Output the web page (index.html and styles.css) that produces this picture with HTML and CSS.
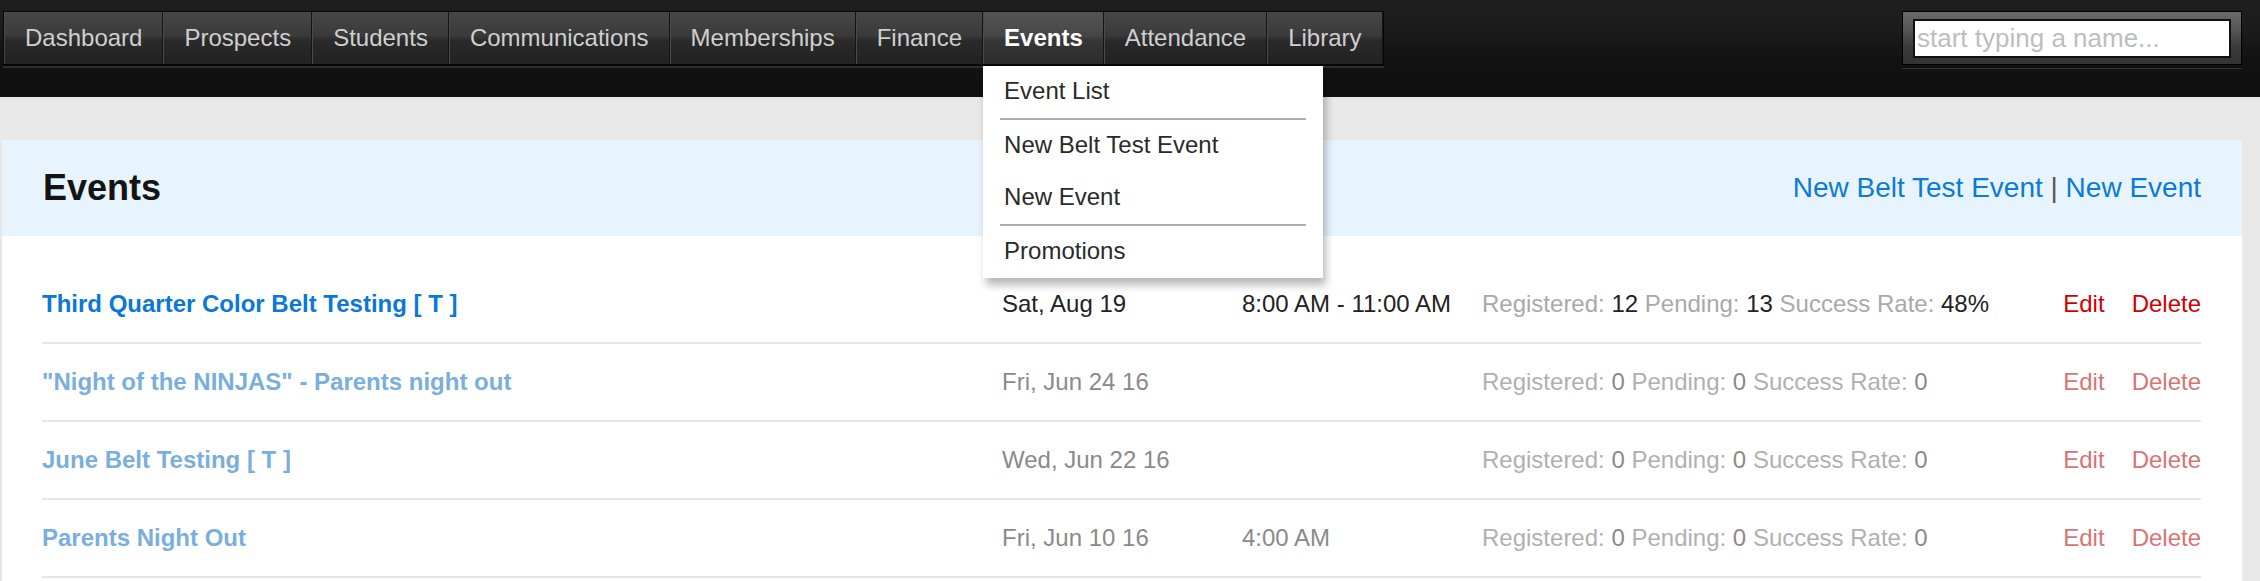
FILE: index.html
```html
<!DOCTYPE html>
<html>
<head>
<meta charset="utf-8">
<title>Events</title>
<link rel="stylesheet" href="styles.css">
</head>
<body>
<header class="topbar">
  <nav class="mainnav">
    <a class="nav-item" href="#">Dashboard</a>
    <a class="nav-item" href="#">Prospects</a>
    <a class="nav-item" href="#">Students</a>
    <a class="nav-item" href="#">Communications</a>
    <a class="nav-item" href="#">Memberships</a>
    <a class="nav-item" href="#">Finance</a>
    <div class="nav-drop">
      <a class="nav-item active" href="#">Events</a>
      <ul class="dropdown">
        <li><a href="#">Event List</a></li>
        <li class="sep"></li>
        <li><a href="#">New Belt Test Event</a></li>
        <li><a href="#">New Event</a></li>
        <li class="sep"></li>
        <li><a href="#">Promotions</a></li>
      </ul>
    </div>
    <a class="nav-item" href="#">Attendance</a>
    <a class="nav-item" href="#">Library</a>
  </nav>
  <div class="searchbox">
    <input class="search-input" type="text" placeholder="start typing a name...">
  </div>
</header>

<main class="panel">
  <div class="panel-head">
    <h1 class="panel-title">Events</h1>
    <div class="head-links">
      <a href="#">New Belt Test Event</a>
      <span class="pipe">|</span>
      <a href="#">New Event</a>
    </div>
  </div>
  <div class="event-list">
    <div class="event-row upcoming">
      <a class="ev-name" href="#">Third Quarter Color Belt Testing [ T ]</a>
      <span class="ev-date">Sat, Aug 19</span>
      <span class="ev-time">8:00 AM - 11:00 AM</span>
      <span class="ev-stats"><span class="lbl">Registered:</span> <span class="val">12</span> <span class="lbl">Pending:</span> <span class="val">13</span> <span class="lbl">Success Rate:</span> <span class="val">48%</span></span>
      <span class="ev-actions"><a href="#">Edit</a><a href="#">Delete</a></span>
    </div>
    <div class="event-row past">
      <a class="ev-name" href="#">"Night of the NINJAS" - Parents night out</a>
      <span class="ev-date">Fri, Jun 24 16</span>
      <span class="ev-time"></span>
      <span class="ev-stats"><span class="lbl">Registered:</span> <span class="val">0</span> <span class="lbl">Pending:</span> <span class="val">0</span> <span class="lbl">Success Rate:</span> <span class="val">0</span></span>
      <span class="ev-actions"><a href="#">Edit</a><a href="#">Delete</a></span>
    </div>
    <div class="event-row past">
      <a class="ev-name" href="#">June Belt Testing [ T ]</a>
      <span class="ev-date">Wed, Jun 22 16</span>
      <span class="ev-time"></span>
      <span class="ev-stats"><span class="lbl">Registered:</span> <span class="val">0</span> <span class="lbl">Pending:</span> <span class="val">0</span> <span class="lbl">Success Rate:</span> <span class="val">0</span></span>
      <span class="ev-actions"><a href="#">Edit</a><a href="#">Delete</a></span>
    </div>
    <div class="event-row past">
      <a class="ev-name" href="#">Parents Night Out</a>
      <span class="ev-date">Fri, Jun 10 16</span>
      <span class="ev-time">4:00 AM</span>
      <span class="ev-stats"><span class="lbl">Registered:</span> <span class="val">0</span> <span class="lbl">Pending:</span> <span class="val">0</span> <span class="lbl">Success Rate:</span> <span class="val">0</span></span>
      <span class="ev-actions"><a href="#">Edit</a><a href="#">Delete</a></span>
    </div>
  </div>
</main>
</body>
</html>
```

FILE: styles.css
```css
html, body {
  margin: 0;
  padding: 0;
}
body {
  background: #e8e8e8;
  font-family: "Liberation Sans", Arial, sans-serif;
  font-size: 24px;
  line-height: 36px;
  color: #222;
  overflow: hidden;
}
a {
  text-decoration: none;
}

/* ---------- top bar ---------- */
.topbar {
  height: 97px;
  box-sizing: border-box;
  padding: 11px 18px 0 3px;
  display: flex;
  justify-content: space-between;
  align-items: flex-start;
  background: linear-gradient(#1f1f1f 0, #1b1b1b 30px, #121212 60px, #111 97px);
}
.mainnav {
  display: flex;
  border: 1px solid #080808;
  border-bottom-width: 2px;
  box-shadow: 0 2px 0 #2e2e2e;
  background: #222;
}
.nav-item {
  display: block;
  height: 52px;
  line-height: 52px;
  padding: 0 20px;
  color: #cfcfcf;
  background: linear-gradient(#474747 0, #3a3a3a 45%, #2a2a2a 55%, #222 100%);
  border-left: 1px solid #4a4a4a;
  border-right: 1px solid #141414;
}
.nav-item.active {
  color: #fff;
  font-weight: bold;
  background: linear-gradient(#555 0, #464646 45%, #363636 55%, #2c2c2c 100%);
}
.nav-drop {
  position: relative;
}
.dropdown {
  position: absolute;
  left: 0;
  top: 54px;
  width: 340px;
  margin: 0;
  padding: 0;
  list-style: none;
  background: #fff;
  box-shadow: 3px 7px 8px rgba(0, 0, 0, 0.28);
  z-index: 10;
}
.dropdown li a {
  display: block;
  padding: 7px 21px 9px 21px;
  color: #2a2a2a;
  line-height: 36px;
}
.dropdown li.sep {
  height: 2px;
  margin: 0 17px;
  background: #ababab;
}

.searchbox {
  width: 340px;
  box-sizing: border-box;
  padding: 7px 10px 6px 10px;
  border: 1px solid #000;
  background: linear-gradient(#6a6a6a 0, #555 35%, #3c3c3c 65%, #333 100%);
  box-shadow: 0 3px 0 #111, 0 4px 0 #333;
}
.search-input {
  display: block;
  width: 100%;
  height: 39px;
  box-sizing: border-box;
  margin: 0;
  padding: 0 2px;
  border: 2px solid #111;
  outline: none;
  background: #fff;
  font-family: "Liberation Sans", Arial, sans-serif;
  font-size: 26px;
  color: #333;
}
.search-input::placeholder {
  color: #bdbdbd;
}

/* ---------- panel ---------- */
.panel {
  margin: 43px 18px 0 2px;
  background: #fff;
  min-height: 441px;
}
.panel-head {
  height: 96px;
  box-sizing: border-box;
  padding: 0 41px;
  display: flex;
  align-items: center;
  justify-content: space-between;
  background: #e7f4fe;
}
.panel-title {
  margin: 0;
  font-size: 36px;
  line-height: 40px;
  font-weight: bold;
  color: #141414;
}
.head-links {
  font-size: 28px;
  line-height: 40px;
  color: #555;
}
.head-links a {
  color: #0b7ad8;
}
.pipe {
  color: #555;
}

.event-list {
  padding: 30px 41px 0 40px;
}
.event-row {
  display: grid;
  grid-template-columns: 960px 240px 240px 1fr auto;
  align-items: center;
  padding: 20px 0;
  border-bottom: 2px solid #e6e6e6;
}
.ev-name {
  font-weight: bold;
  color: #0a78d7;
}
.ev-actions {
  display: flex;
  gap: 27px;
}
.ev-actions a {
  color: #d10000;
}
.lbl {
  color: #a9a9a9;
}
.val {
  color: #222;
}

.event-row.past .ev-name {
  color: #7aafdd;
}
.event-row.past .ev-date,
.event-row.past .ev-time,
.event-row.past .val {
  color: #8a8a8a;
}
.event-row.past .lbl {
  color: #b0b0b0;
}
.event-row.past .ev-actions a {
  color: #d87474;
}
```
